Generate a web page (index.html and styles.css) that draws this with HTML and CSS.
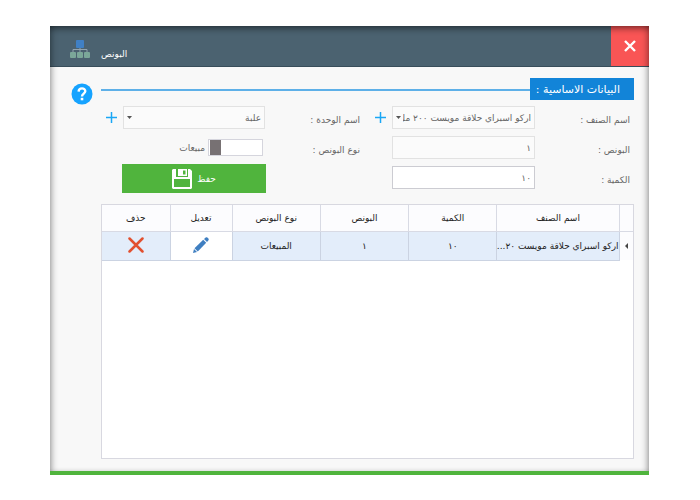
FILE: index.html
```html
<!DOCTYPE html>
<html lang="ar" dir="rtl">
<head>
    <meta charset="UTF-8">
    <meta name="viewport" content="width=device-width, initial-scale=1.0">
    <title>البونص</title>
    <link rel="stylesheet" href="styles.css">
</head>
<body>
    <div class="window">
        <header class="titlebar">
            <button class="close-btn" type="button" aria-label="إغلاق">
                <svg width="12" height="12" viewBox="0 0 12 12"><path d="M1 1L11 11M11 1L1 11" stroke="#fff" stroke-width="2.4"/></svg>
            </button>
            <h1 class="window-title">البونص</h1>
            <svg class="window-icon" width="20" height="18" viewBox="0 0 20 18">
                <path d="M10 7V12M3 12V9.500H17V12" fill="none" stroke="#93a3ad"/>
                <rect x="6" y="0" width="8" height="8" rx="1" fill="#4080c4"/>
                <rect x="0" y="12" width="6" height="6" rx="1" fill="#7ba899"/>
                <rect x="7" y="12" width="6" height="6" rx="1" fill="#7ba899"/>
                <rect x="14" y="12" width="6" height="6" rx="1" fill="#7ba899"/>
            </svg>
        </header>

        <main class="content">
            <div class="section-head">
                <h2 class="section-title">البيانات الاساسية :</h2>
                <span class="section-line"></span>
                <button class="help-btn" type="button" aria-label="مساعدة">
                    <svg width="22" height="22" viewBox="0 0 22 22">
                        <circle cx="11" cy="11" r="10.500" fill="#16a3ff"/>
                        <path d="M7.600 8.600C7.700 4.300 14.400 4.400 14.300 8.300C14.200 10.600 11 10.700 11 13.500" fill="none" stroke="#fff" stroke-width="2.400"/>
                        <rect x="9.700" y="14.800" width="2.600" height="2.500" fill="#fff"/>
                    </svg>
                </button>
            </div>

            <form class="form">
                <label class="label first" for="item">اسم الصنف :</label>
                <select class="field" id="item">
                    <option>اركو اسبراي حلاقة مويست ٢٠٠ مل</option>
                </select>
                <button class="add-btn" type="button" aria-label="إضافة صنف">
                    <svg width="11" height="11" viewBox="0 0 11 11"><path d="M5.500 0V11M0 5.500H11" stroke="#1aa7f5" stroke-width="1.500"/></svg>
                </button>
                <label class="label second" for="unit">اسم الوحدة :</label>
                <select class="field" id="unit">
                    <option>علبة</option>
                </select>
                <button class="add-btn" type="button" aria-label="إضافة وحدة">
                    <svg width="11" height="11" viewBox="0 0 11 11"><path d="M5.500 0V11M0 5.500H11" stroke="#1aa7f5" stroke-width="1.500"/></svg>
                </button>

                <label class="label first" for="bonus">البونص :</label>
                <input class="field" id="bonus" type="text" value="١">
                <label class="label second" for="type">نوع البونص :</label>
                <div class="switch-group">
                    <input class="switch" id="type" type="checkbox" role="switch">
                    <span>مبيعات</span>
                </div>

                <label class="label first" for="qty">الكمية :</label>
                <input class="field active" id="qty" type="text" value="١٠">
                <button class="save-btn" type="button">
                    حفظ
                    <svg width="20" height="20" viewBox="0 0 20 20">
                        <path d="M1 0H4V8H16V0H18L20 2V19L19 20H1L0 19V1Z" fill="#fff"/>
                        <path d="M6 0H15V7H6Z" fill="#fff"/>
                        <path d="M11 1.500H13.500V5.500H11Z" fill="#50b43d"/>
                        <path d="M2 10H18V18H2Z" fill="#50b43d"/>
                        <path d="M4 0H6V8H4Z M15 0H16V8H15Z" fill="#50b43d"/>
                    </svg>
                </button>
            </form>

            <div class="grid-box">
                <table class="grid">
                    <colgroup>
                        <col class="col-mark">
                        <col class="col-name">
                        <col class="col-mid">
                        <col class="col-mid">
                        <col class="col-mid">
                        <col class="col-edit">
                        <col class="col-delete">
                    </colgroup>
                    <thead>
                        <tr>
                            <th></th>
                            <th>اسم الصنف</th>
                            <th>الكمية</th>
                            <th>البونص</th>
                            <th>نوع البونص</th>
                            <th>تعديل</th>
                            <th>حذف</th>
                        </tr>
                    </thead>
                    <tbody>
                        <tr>
                            <td class="mark"><svg width="3" height="6" viewBox="0 0 3 6"><path d="M3 0V6L0 3Z" fill="#444"/></svg></td>
                            <td class="name">اركو اسبراي حلاقة مويست ٢٠...</td>
                            <td>١٠</td>
                            <td>١</td>
                            <td>المبيعات</td>
                            <td class="edit">
                                <button class="icon-btn" type="button" aria-label="تعديل">
                                    <svg width="16" height="16" viewBox="0 0 16 16" fill="#3f7fc1">
                                        <path d="M0 16L1 12L4 15Z"/>
                                        <path d="M1.500 11.200L10.200 2.800L13.200 5.800L4.800 14.500Z"/>
                                        <path d="M11 2L13 0.300Q14 0 15 1Q16 2 15.700 3L14 5Z"/>
                                    </svg>
                                </button>
                            </td>
                            <td>
                                <button class="icon-btn" type="button" aria-label="حذف">
                                    <svg width="16" height="16" viewBox="0 0 16 16"><path d="M1.500 1.500L14.500 14.500M14.500 1.500L1.500 14.500" stroke="#e2502f" stroke-width="2.500" stroke-linecap="round"/></svg>
                                </button>
                            </td>
                        </tr>
                    </tbody>
                </table>
            </div>
        </main>
    </div>
</body>
</html>
```

FILE: styles.css
```css
* {
    margin: 0;
    padding: 0;
    box-sizing: border-box;
}

body {
    font-family: 'DejaVu Sans', sans-serif;
    font-size: 9px;
    color: #666;
    background-color: #fff;
    padding: 26px 51px 25px 50px;
}

button,
input,
select {
    font: inherit;
    color: inherit;
}

button {
    border: none;
    background: none;
    cursor: pointer;
}

svg {
    display: block;
}

.window {
    position: relative;
    display: flex;
    flex-direction: column;
    min-height: calc(100vh - 51px);
    background-color: #f8f8f8;
    border-bottom: 4px solid #50b43d;
}

/* soft shade along the inner edges */
.window::after {
    content: '';
    position: absolute;
    inset: 0;
    box-shadow: inset 5px 0 6px -3px rgba(0, 0, 0, 0.3), inset -5px 0 6px -3px rgba(0, 0, 0, 0.3), inset 0 6px 6px -3px rgba(0, 0, 0, 0.4);
    pointer-events: none;
}

/* Title bar */
.titlebar {
    display: flex;
    align-items: center;
    height: 41px;
    background-color: #4b6270;
    border-bottom: 1px solid #384d5a;
    padding-left: 20px;
}

.close-btn {
    display: flex;
    align-items: center;
    justify-content: center;
    width: 38px;
    height: 40px;
    align-self: flex-start;
    background-color: #f95555;
}

.window-title {
    margin-right: auto;
    margin-left: 11px;
    padding-top: 16px;
    font-size: 9px;
    font-weight: 400;
    color: #fff;
}

.window-icon {
    margin-top: 6px;
}

/* Content */
.content {
    flex: 1;
    display: flex;
    flex-direction: column;
    padding: 11px 15px 12px 21px;
}

.section-head {
    display: flex;
    align-items: center;
    height: 22px;
}

.section-title {
    width: 104px;
    height: 22px;
    padding-right: 14px;
    line-height: 24px;
    font-size: 11px;
    font-weight: 400;
    white-space: nowrap;
    color: #fff;
    background-color: #1284d8;
}

.section-line {
    flex: 1;
    height: 2px;
    margin-top: 2px;
    background-color: #5eb0e8;
}

.help-btn {
    margin-right: 8px;
    padding-top: 9px;
}

/* Form */
.form {
    display: grid;
    grid-template-columns: 99fr 143fr 32px 95fr 142fr 22px;
    grid-auto-rows: 23px;
    row-gap: 7px;
    margin-top: 6px;
    margin-left: 30px;
}

.label {
    align-self: end;
    line-height: 18px;
    white-space: nowrap;
}

.first {
    grid-column: 1;
    padding-right: 4px;
}

.second {
    grid-column: 4;
}

.field {
    width: 100%;
    min-width: 0;
    height: 23px;
    padding: 0 3px;
    border: 1px solid #e2e2e2;
    background-color: #fbfbfb;
}

select.field {
    appearance: none;
    padding-left: 10px;
    background-image: url("data:image/svg+xml,%3Csvg xmlns='http://www.w3.org/2000/svg' width='5' height='3'%3E%3Cpath d='M0 0H5L2.5 3Z' fill='%23555'/%3E%3C/svg%3E");
    background-position: 3px 9px;
    background-repeat: no-repeat;
}

.field.active {
    background-color: #fff;
    border-color: #ccccd2;
}

.add-btn {
    justify-self: start;
    padding: 0 6px;
}

.switch-group {
    display: flex;
    align-items: center;
    gap: 3px;
    padding-right: 2px;
}

.switch {
    appearance: none;
    width: 55px;
    height: 17px;
    border: 1px solid #d5d5dd;
    background: linear-gradient(to right, #fff 1px, #777173 1px, #777173 12px, #fff 12px);
    cursor: pointer;
}

.switch:checked {
    background: linear-gradient(to left, #50b43d 12px, #fff 12px);
}

.save-btn {
    grid-column: 5;
    display: flex;
    align-items: center;
    justify-content: center;
    gap: 5px;
    height: 29px;
    margin: -2px -1px 0;
    color: #fff;
    background-color: #50b43d;
}

/* Grid */
.grid-box {
    flex: 1;
    margin-top: 15px;
    margin-left: 30px;
    border: 1px solid #d8d8e0;
    background-color: #fff;
}

.grid {
    width: 100%;
    table-layout: fixed;
    border-collapse: collapse;
    color: #222;
}

.col-mark {
    width: 14px;
}

.col-name {
    width: 23%;
}

.col-edit {
    width: 62px;
}

.col-delete {
    width: 68px;
}

.grid th {
    height: 26px;
    font-weight: 400;
    background-color: #fcfcfe;
    border-left: 1px solid #d8dae4;
    border-bottom: 1px solid #d8dae4;
}

.grid td {
    height: 29px;
    text-align: center;
    background-color: #e3edfa;
    border-left: 1px solid #cbd3e2;
    border-bottom: 1px solid #cbd3e2;
}

.grid th:last-child,
.grid td:last-child {
    border-left: none;
}

.grid .name {
    overflow: hidden;
    white-space: nowrap;
}

.grid .mark {
    background-color: #fcfcfe;
    border-bottom: none;
}

.grid .edit {
    background-color: #fff;
}

.mark svg,
.icon-btn svg {
    margin: 0 auto;
}
```
